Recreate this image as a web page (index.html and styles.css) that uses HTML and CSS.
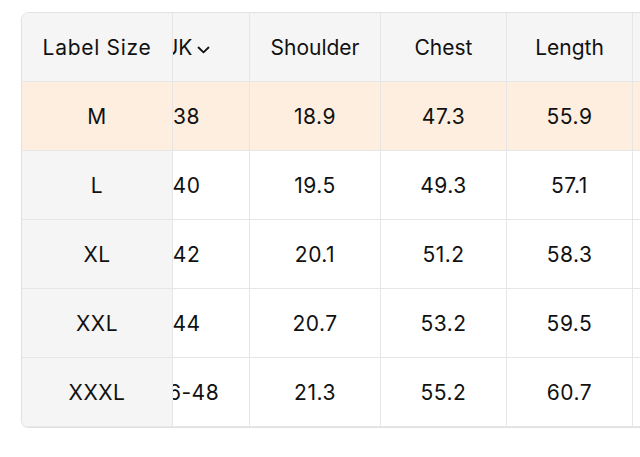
FILE: index.html
```html
<!DOCTYPE html>
<html lang="en">
<head>
<meta charset="utf-8">
<title>Size chart</title>
<link rel="stylesheet" href="styles.css">
</head>
<body>
<div class="page">
  <div class="card">
    <div class="frozen">
      <div class="cell head label">Label Size</div>
      <div class="cell hl">M</div>
      <div class="cell">L</div>
      <div class="cell">XL</div>
      <div class="cell">XXL</div>
      <div class="cell">XXXL</div>
    </div>
    <div class="viewport">
      <div class="grid">
        <div class="cell head">UK<svg class="chev" width="13" height="8" viewBox="0 0 13 8"><polyline points="1.5,1.5 6.5,6.3 11.5,1.5" fill="none" stroke="#111" stroke-width="1.8" stroke-linecap="round" stroke-linejoin="round"/></svg></div>
        <div class="cell head">Shoulder</div>
        <div class="cell head">Chest</div>
        <div class="cell head">Length</div>
        <div class="cell head">Sleeve</div>

        <div class="cell hl">38</div>
        <div class="cell hl">18.9</div>
        <div class="cell hl">47.3</div>
        <div class="cell hl">55.9</div>
        <div class="cell hl">24.0</div>

        <div class="cell">40</div>
        <div class="cell">19.5</div>
        <div class="cell">49.3</div>
        <div class="cell">57.1</div>
        <div class="cell">24.4</div>

        <div class="cell">42</div>
        <div class="cell">20.1</div>
        <div class="cell">51.2</div>
        <div class="cell">58.3</div>
        <div class="cell">24.8</div>

        <div class="cell">44</div>
        <div class="cell">20.7</div>
        <div class="cell">53.2</div>
        <div class="cell">59.5</div>
        <div class="cell">25.2</div>

        <div class="cell">46-48</div>
        <div class="cell">21.3</div>
        <div class="cell">55.2</div>
        <div class="cell">60.7</div>
        <div class="cell">25.6</div>
      </div>
    </div>
  </div>
</div>
</body>
</html>
```

FILE: styles.css
```css
html, body {
  margin: 0;
  padding: 0;
  background: #ffffff;
  overflow: hidden;
}

body {
  font-family: Inter, "Liberation Sans", sans-serif;
  font-size: 21px;
  color: #111111;
}

.page {
  padding: 12px 0 0 21px;
}

.card {
  display: flex;
  width: 720px;
  border: 1px solid #e2e2e2;
  border-radius: 8px;
  overflow: hidden;
  box-shadow: 0 1px 2px rgba(0, 0, 0, 0.06);
  background: #ffffff;
}

.frozen {
  flex: 0 0 150px;
  border-right: 1px solid #e6e6e6;
  background: #f5f5f5;
  display: flex;
  flex-direction: column;
}

.viewport {
  flex: 1 1 auto;
  overflow: hidden;
}

.grid {
  display: grid;
  grid-template-columns: 126px 131px 126px 126px 140px;
  margin-left: -49px;
}

.cell {
  height: 67px;
  padding-top: 1px;
  border-bottom: 1px solid #e6e6e6;
  display: flex;
  align-items: center;
  justify-content: center;
  white-space: nowrap;
  letter-spacing: 0.5px;
}

.grid .cell {
  border-right: 1px solid #e6e6e6;
}

.head {
  background: #f5f5f5;
  letter-spacing: 0;
}

.label {
  letter-spacing: 0.7px;
}

.hl {
  background: #fdeee0;
}

.chev {
  margin-left: 5px;
  margin-top: 4px;
}
```
